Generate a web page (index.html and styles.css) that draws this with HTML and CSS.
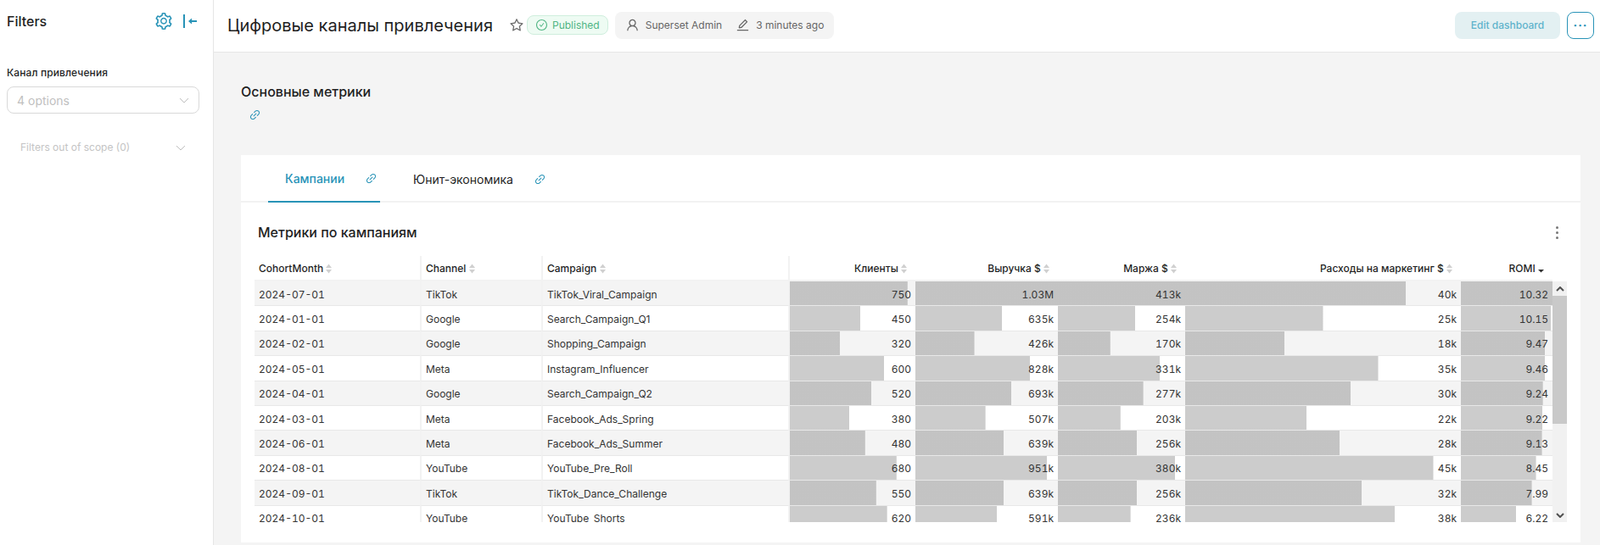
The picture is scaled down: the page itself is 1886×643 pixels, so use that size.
FILE: index.html
```html
<!DOCTYPE html>
<html lang="en">
<head>
    <meta charset="UTF-8">
    <meta name="viewport" content="width=device-width, initial-scale=1.0">
    <title>Цифровые каналы привлечения</title>
    <link rel="stylesheet" href="styles.css">
</head>
<body>
    <svg class="icon-defs" xmlns="http://www.w3.org/2000/svg">
        <symbol id="i-gear" viewBox="64 64 896 896"><path d="M924.8 625.7l-65.5-56c3.1-19 4.7-38.4 4.7-57.8s-1.6-38.8-4.7-57.8l65.5-56a32.03 32.03 0 0 0 9.3-35.2l-.9-2.6a443.74 443.74 0 0 0-79.7-137.9l-1.8-2.1a32.12 32.12 0 0 0-35.1-9.5l-81.3 28.9c-30-24.6-63.5-44-99.7-57.6l-15.7-85a32.05 32.05 0 0 0-25.8-25.7l-2.7-.5c-52.1-9.4-106.9-9.4-159 0l-2.7.5a32.05 32.05 0 0 0-25.8 25.7l-15.8 85.4a351.86 351.86 0 0 0-99 57.4l-81.9-29.1a32 32 0 0 0-35.1 9.5l-1.8 2.1a446.02 446.02 0 0 0-79.7 137.9l-.9 2.6c-4.5 12.5-.8 26.5 9.3 35.2l66.3 56.6c-3.1 18.8-4.6 38-4.6 57.1 0 19.2 1.5 38.4 4.6 57.1L99 625.5a32.03 32.03 0 0 0-9.3 35.2l.9 2.6c18.1 50.4 44.9 96.9 79.7 137.9l1.8 2.1a32.12 32.12 0 0 0 35.1 9.5l81.9-29.1c29.8 24.5 63.1 43.9 99 57.4l15.8 85.4a32.05 32.05 0 0 0 25.8 25.7l2.7.5a449.4 449.4 0 0 0 159 0l2.7-.5a32.05 32.05 0 0 0 25.8-25.7l15.7-85a350 350 0 0 0 99.7-57.6l81.3 28.9a32 32 0 0 0 35.1-9.5l1.8-2.1c34.8-41.1 61.6-87.5 79.7-137.9l.9-2.6c4.5-12.3.8-26.3-9.3-35zM788.3 465.9c2.5 15.1 3.8 30.6 3.8 46.1s-1.3 31-3.8 46.1l-6.6 40.1 74.7 63.9a370.03 370.03 0 0 1-42.6 73.6L721 702.8l-31.4 25.8c-23.9 19.6-50.5 35-79.3 45.8l-38.1 14.3-17.9 97a377.5 377.5 0 0 1-85 0l-17.9-97.2-37.8-14.5c-28.5-10.8-55-26.2-78.7-45.7l-31.4-25.9-93.4 33.2c-17-22.9-31.2-47.6-42.6-73.6l75.5-64.5-6.5-40c-2.4-14.9-3.7-30.3-3.7-45.5 0-15.3 1.2-30.6 3.7-45.5l6.5-40-75.5-64.5c11.3-26.1 25.6-50.7 42.6-73.6l93.4 33.2 31.4-25.9c23.7-19.5 50.2-34.9 78.7-45.7l37.9-14.3 17.9-97.2c28.1-3.2 56.8-3.2 85 0l17.9 97 38.1 14.3c28.7 10.8 55.4 26.2 79.3 45.8l31.4 25.8 92.8-32.9c17 22.9 31.2 47.6 42.6 73.6L781.8 426l6.5 39.9zM512 326c-97.2 0-176 78.8-176 176s78.8 176 176 176 176-78.8 176-176-78.8-176-176-176zm79.2 255.2A111.6 111.6 0 0 1 512 614c-29.9 0-58-11.7-79.2-32.8A111.6 111.6 0 0 1 400 502c0-29.9 11.7-58 32.8-79.2C454 401.6 482.1 390 512 390c29.9 0 58 11.6 79.2 32.8A111.6 111.6 0 0 1 624 502c0 29.9-11.7 58-32.8 79.2z"/></symbol>
        <symbol id="i-link" viewBox="64 64 896 896"><path d="M574 665.4a8.03 8.03 0 0 0-11.3 0L446.5 781.6c-53.8 53.8-144.6 59.5-204 0-59.5-59.5-53.8-150.2 0-204l116.2-116.2c3.1-3.1 3.1-8.2 0-11.3l-39.8-39.8a8.03 8.03 0 0 0-11.3 0L191.4 526.5c-84.6 84.6-84.6 221.5 0 306s221.5 84.6 306 0l116.2-116.2c3.1-3.1 3.1-8.2 0-11.3L574 665.4zm258.6-474c-84.6-84.6-221.5-84.6-306 0L410.3 307.6a8.03 8.03 0 0 0 0 11.3l39.7 39.7c3.1 3.1 8.2 3.1 11.3 0l116.2-116.2c53.8-53.8 144.6-59.5 204 0 59.5 59.5 53.8 150.2 0 204L665.3 562.6a8.03 8.03 0 0 0 0 11.3l39.8 39.8c3.1 3.1 8.2 3.1 11.3 0l116.2-116.2c84.5-84.6 84.5-221.5 0-306.1zM610.1 372.3a8.03 8.03 0 0 0-11.3 0L372.3 598.7a8.03 8.03 0 0 0 0 11.3l39.6 39.6c3.1 3.1 8.2 3.1 11.3 0l226.4-226.4c3.1-3.1 3.1-8.2 0-11.3l-39.5-39.6z"/></symbol>
        <symbol id="i-star" viewBox="64 64 896 896"><path d="M908.1 353.1l-253.9-36.9L540.7 86.1c-3.1-6.3-8.2-11.4-14.5-14.5-15.8-7.8-35-1.3-42.9 14.5L369.8 316.2l-253.9 36.9c-7 1-13.4 4.3-18.3 9.3a32.05 32.05 0 0 0 .6 45.3l183.7 179.1-43.4 252.9a31.95 31.95 0 0 0 46.4 33.7L512 754l227.1 119.4c6.2 3.3 13.4 4.4 20.3 3.2 17.4-3 29.1-19.5 26.1-36.9l-43.4-252.9 183.7-179.1c5-4.9 8.3-11.3 9.3-18.3 2.7-17.5-9.5-33.7-27-36.3zM664.8 561.6l36.1 210.3L512 672.7 323.1 772l36.1-210.3-152.8-149L417.6 382 512 190.7 606.4 382l211.2 30.7-152.8 148.9z"/></symbol>
        <symbol id="i-check" viewBox="64 64 896 896"><path d="M699 353h-46.9c-10.2 0-19.9 4.9-25.9 13.3L469 584.3l-71.2-98.8c-6-8.3-15.6-13.3-25.9-13.3H325c-6.5 0-10.3 7.4-6.5 12.7l124.6 172.8a31.8 31.8 0 0 0 51.7 0l210.6-292c3.9-5.3.1-12.7-6.4-12.7z"/><path d="M512 64C264.6 64 64 264.6 64 512s200.6 448 448 448 448-200.6 448-448S759.4 64 512 64zm0 820c-205.4 0-372-166.6-372-372s166.6-372 372-372 372 166.6 372 372-166.6 372-372 372z"/></symbol>
        <symbol id="i-user" viewBox="64 64 896 896"><path d="M858.5 763.6a374 374 0 0 0-80.6-119.5 375.63 375.63 0 0 0-119.5-80.6c-.4-.2-.8-.3-1.2-.5C719.5 518 760 444.7 760 362c0-137-111-248-248-248S264 225 264 362c0 82.7 40.5 156 102.8 201.1-.4.2-.8.3-1.2.5-44.8 18.9-85 46-119.5 80.6a375.63 375.63 0 0 0-80.6 119.5A371.7 371.7 0 0 0 136 901.8a8 8 0 0 0 8 8.2h60c4.4 0 7.9-3.5 8-7.8 2-77.2 33-149.5 87.8-204.3 56.7-56.7 132-87.9 212.2-87.9s155.5 31.2 212.2 87.9C779 752.7 810 825 812 902.2c.1 4.4 3.6 7.8 8 7.8h60a8 8 0 0 0 8-8.2c-1-47.8-10.9-94.3-29.5-138.2zM512 534c-45.9 0-89.1-17.9-121.6-50.4S340 407.9 340 362c0-45.9 17.9-89.1 50.4-121.6S466.1 190 512 190s89.1 17.9 121.6 50.4S684 316.1 684 362c0 45.9-17.9 89.1-50.4 121.6S557.9 534 512 534z"/></symbol>
        <symbol id="i-edit" viewBox="64 64 896 896"><path d="M257.7 752c2 0 4-.2 6-.5L431.9 722c2-.4 3.9-1.3 5.3-2.8l423.9-423.9a9.96 9.96 0 0 0 0-14.1L694.9 114.9c-1.9-1.9-4.4-2.9-7.1-2.9s-5.2 1-7.1 2.9L256.8 538.8c-1.5 1.5-2.4 3.3-2.8 5.3l-29.5 168.2a33.5 33.5 0 0 0 9.4 29.8c6.6 6.4 14.9 9.9 23.8 9.9zm67.4-174.4L687.8 215l73.3 73.3-362.7 362.6-88.9 15.7 15.6-89zM880 836H144c-17.7 0-32 14.3-32 32v36c0 4.4 3.6 8 8 8h784c4.4 0 8-3.6 8-8v-36c0-17.7-14.3-32-32-32z"/></symbol>
        <symbol id="i-chevron" viewBox="0 0 12 7"><path d="M1 1l5 5 5-5" fill="none" stroke="currentColor" stroke-width="1"/></symbol>
        <symbol id="i-arrow" viewBox="0 0 10 6"><path d="M1 1l4 4 4-4" fill="none" stroke="currentColor" stroke-width="2"/></symbol>
        <symbol id="i-sort" viewBox="0 0 7 12"><path d="M3.5 0.5L7 5H0zM3.5 11.5L0 7H7z"/></symbol>
        <symbol id="i-sort-down" viewBox="0 0 7 12"><path d="M3.5 10.5L0 7H7z"/></symbol>
    </svg>

    <aside class="filters">
        <div class="filters-head">
            <span class="filters-title">Filters</span>
            <svg class="icon icon-gear"><use href="#i-gear"/></svg>
            <svg class="icon-collapse" viewBox="0 0 16 16"><path d="M0 0h2v16H0zM6 8l4-3.5v2.500h6v2h-6v2.500z"/></svg>
        </div>
        <label class="filter-label">Канал привлечения</label>
        <div class="filter-select">
            <span>4 options</span>
            <svg class="chevron"><use href="#i-chevron"/></svg>
        </div>
        <div class="filter-scope">
            <span>Filters out of scope (0)</span>
            <svg class="chevron"><use href="#i-chevron"/></svg>
        </div>
    </aside>

    <div class="main">
        <header class="topbar">
            <h1 class="dash-title">Цифровые каналы привлечения</h1>
            <svg class="icon icon-star"><use href="#i-star"/></svg>
            <span class="badge">
                <svg class="icon icon-check"><use href="#i-check"/></svg>
                Published
            </span>
            <div class="meta">
                <svg class="icon icon-meta"><use href="#i-user"/></svg>
                <span class="meta-user">Superset Admin</span>
                <svg class="icon icon-meta"><use href="#i-edit"/></svg>
                <span>3 minutes ago</span>
            </div>
            <button class="btn-edit">Edit dashboard</button>
            <button class="btn-more">···</button>
        </header>

        <main class="content">
            <h2 class="section-title">Основные метрики</h2>
            <svg class="icon icon-link section-link"><use href="#i-link"/></svg>

            <section class="card">
                <nav class="tabs">
                    <div class="tab tab-active">
                        <span>Кампании</span>
                        <svg class="icon icon-link"><use href="#i-link"/></svg>
                    </div>
                    <div class="tab">
                        <span>Юнит-экономика</span>
                        <svg class="icon icon-link"><use href="#i-link"/></svg>
                    </div>
                </nav>

                <div class="chart-head">
                    <h3 class="chart-title">Метрики по кампаниям</h3>
                    <span class="chart-menu"><i></i><i></i><i></i></span>
                </div>

                <div class="table-wrap">
                    <div class="table-scroll">
                        <table class="metrics">
                            <colgroup>
                                <col class="c-month"><col class="c-channel"><col class="c-campaign"><col class="c-clients"><col class="c-revenue"><col class="c-margin"><col class="c-spend"><col class="c-romi">
                            </colgroup>
                            <thead>
                                <tr>
                                    <th>CohortMonth <svg class="sort"><use href="#i-sort"/></svg></th>
                                    <th class="sep">Channel <svg class="sort"><use href="#i-sort"/></svg></th>
                                    <th class="sep">Campaign <svg class="sort"><use href="#i-sort"/></svg></th>
                                    <th class="sep num">Клиенты <svg class="sort"><use href="#i-sort"/></svg></th>
                                    <th class="num">Выручка $ <svg class="sort"><use href="#i-sort"/></svg></th>
                                    <th class="num">Маржа $ <svg class="sort"><use href="#i-sort"/></svg></th>
                                    <th class="num">Расходы на маркетинг $ <svg class="sort"><use href="#i-sort"/></svg></th>
                                    <th class="num">ROMI <svg class="sort sort-on"><use href="#i-sort-down"/></svg></th>
                                </tr>
                            </thead>
                            <tbody>
                                <tr><td class="mono">2024-07-01</td><td class="sep">TikTok</td><td class="sep">TikTok_Viral_Campaign</td><td class="sep num bar" style="--bar:93.8%">750</td><td class="num bar" style="--bar:100%">1.03M</td><td class="num bar" style="--bar:100%">413k</td><td class="num bar" style="--bar:80%">40k</td><td class="num bar" style="--bar:100%">10.32</td></tr>
                                <tr><td class="mono">2024-01-01</td><td class="sep">Google</td><td class="sep">Search_Campaign_Q1</td><td class="sep num bar" style="--bar:56.3%">450</td><td class="num bar" style="--bar:60.8%">635k</td><td class="num bar" style="--bar:60.8%">254k</td><td class="num bar" style="--bar:50%">25k</td><td class="num bar" style="--bar:98.3%">10.15</td></tr>
                                <tr><td class="mono">2024-02-01</td><td class="sep">Google</td><td class="sep">Shopping_Campaign</td><td class="sep num bar" style="--bar:40%">320</td><td class="num bar" style="--bar:41.4%">426k</td><td class="num bar" style="--bar:41.2%">170k</td><td class="num bar" style="--bar:36%">18k</td><td class="num bar" style="--bar:91.8%">9.47</td></tr>
                                <tr><td class="mono">2024-05-01</td><td class="sep">Meta</td><td class="sep">Instagram_Influencer</td><td class="sep num bar" style="--bar:75%">600</td><td class="num bar" style="--bar:80.4%">828k</td><td class="num bar" style="--bar:80.1%">331k</td><td class="num bar" style="--bar:70%">35k</td><td class="num bar" style="--bar:91.7%">9.46</td></tr>
                                <tr><td class="mono">2024-04-01</td><td class="sep">Google</td><td class="sep">Search_Campaign_Q2</td><td class="sep num bar" style="--bar:65%">520</td><td class="num bar" style="--bar:67.3%">693k</td><td class="num bar" style="--bar:67.1%">277k</td><td class="num bar" style="--bar:60%">30k</td><td class="num bar" style="--bar:89.5%">9.24</td></tr>
                                <tr><td class="mono">2024-03-01</td><td class="sep">Meta</td><td class="sep">Facebook_Ads_Spring</td><td class="sep num bar" style="--bar:47.5%">380</td><td class="num bar" style="--bar:49.2%">507k</td><td class="num bar" style="--bar:49.2%">203k</td><td class="num bar" style="--bar:44%">22k</td><td class="num bar" style="--bar:89.3%">9.22</td></tr>
                                <tr><td class="mono">2024-06-01</td><td class="sep">Meta</td><td class="sep">Facebook_Ads_Summer</td><td class="sep num bar" style="--bar:60%">480</td><td class="num bar" style="--bar:62%">639k</td><td class="num bar" style="--bar:62%">256k</td><td class="num bar" style="--bar:56%">28k</td><td class="num bar" style="--bar:88.5%">9.13</td></tr>
                                <tr><td class="mono">2024-08-01</td><td class="sep">YouTube</td><td class="sep">YouTube_Pre_Roll</td><td class="sep num bar" style="--bar:85%">680</td><td class="num bar" style="--bar:92.3%">951k</td><td class="num bar" style="--bar:92%">380k</td><td class="num bar" style="--bar:90%">45k</td><td class="num bar" style="--bar:82%">8.45</td></tr>
                                <tr><td class="mono">2024-09-01</td><td class="sep">TikTok</td><td class="sep">TikTok_Dance_Challenge</td><td class="sep num bar" style="--bar:68.8%">550</td><td class="num bar" style="--bar:62%">639k</td><td class="num bar" style="--bar:62%">256k</td><td class="num bar" style="--bar:64%">32k</td><td class="num bar" style="--bar:77.4%">7.99</td></tr>
                                <tr><td class="mono">2024-10-01</td><td class="sep">YouTube</td><td class="sep">YouTube_Shorts</td><td class="sep num bar" style="--bar:77.5%">620</td><td class="num bar" style="--bar:57.4%">591k</td><td class="num bar" style="--bar:57.1%">236k</td><td class="num bar" style="--bar:76%">38k</td><td class="num bar" style="--bar:60.3%">6.22</td></tr>
                            </tbody>
                        </table>
                    </div>
                    <div class="scrollbar">
                        <div class="sb-btn"><svg class="sb-arrow sb-up"><use href="#i-arrow"/></svg></div>
                        <div class="sb-thumb"></div>
                        <div class="sb-track"></div>
                        <div class="sb-btn"><svg class="sb-arrow"><use href="#i-arrow"/></svg></div>
                    </div>
                </div>
            </section>
        </main>
    </div>
</body>
</html>
```

FILE: styles.css
```css
* {
    box-sizing: border-box;
}
html, body {
    height: 100%;
}
body {
    margin: 0;
    display: flex;
    overflow: hidden;
    font-family: Inter, "Noto Sans", sans-serif;
    color: #1f1f1f;
    background-color: #fff;
}
.icon-defs {
    display: none;
}
.icon {
    fill: currentColor;
    flex: none;
}

/* filter bar */
.filters {
    width: 252px;
    flex: none;
    border-right: 1px solid #e6e6e6;
    padding: 0 16px 0 8px;
}
.filters-head {
    height: 50px;
    display: flex;
    align-items: center;
    padding-right: 3px;
}
.filters-title {
    font-size: 16px;
    font-weight: 500;
    flex: 1;
}
.icon-gear {
    width: 20px;
    height: 20px;
    color: #2893b7;
}
.icon-collapse {
    width: 16px;
    height: 16px;
    margin-left: 13px;
    fill: #2893b7;
}
.filter-label {
    display: block;
    margin-top: 28px;
    font-size: 12px;
    font-weight: 500;
    letter-spacing: .1px;
    line-height: 16px;
}
.filter-select {
    height: 32px;
    margin-top: 8px;
    border: 1px solid #d9d9d9;
    border-radius: 8px;
    padding: 0 11px;
    display: flex;
    align-items: center;
    justify-content: space-between;
    font-size: 14px;
    color: #bfbfbf;
}
.chevron {
    width: 12px;
    height: 7px;
    color: #bfbfbf;
}
.filter-scope {
    margin-top: 32px;
    padding: 0 16px;
    display: flex;
    align-items: center;
    justify-content: space-between;
    font-size: 12px;
    line-height: 16px;
    color: #c4c4c4;
}

/* header */
.main {
    flex: 1;
    min-width: 0;
    display: flex;
    flex-direction: column;
}
.topbar {
    height: 62px;
    flex: none;
    border-bottom: 1px solid #e6e6e6;
    padding: 0 7px 2px 16px;
    display: flex;
    align-items: center;
}
.dash-title {
    margin: 0;
    font-size: 20px;
    font-weight: 400;
    color: #1f1f1f;
}
.icon-star {
    width: 16px;
    height: 16px;
    margin-left: 20px;
    color: #6b6b6b;
}
.badge {
    height: 23px;
    margin-left: 4px;
    padding: 0 9px 0 10px;
    display: flex;
    align-items: center;
    gap: 6px;
    font-size: 12px;
    color: #4fb583;
    background-color: #eefbf3;
    border: 1px solid #cfeedd;
    border-radius: 8px;
}
.icon-check {
    width: 13px;
    height: 13px;
}
.meta {
    height: 32px;
    margin-left: 8px;
    padding: 0 12px 0 13px;
    display: flex;
    align-items: center;
    gap: 8px;
    font-size: 12px;
    color: #666;
    background-color: #f4f4f4;
    border-radius: 8px;
}
.meta-user {
    margin-right: 9px;
}
.icon-meta {
    width: 15px;
    height: 15px;
}
.btn-edit {
    height: 32px;
    width: 124px;
    margin-left: auto;
    border: 0;
    border-radius: 8px;
    font: 500 12px Inter, sans-serif;
    color: #5fb3cc;
    background-color: #e3f0f2;
}
.btn-more {
    width: 32px;
    height: 32px;
    margin-left: 8px;
    padding: 0;
    border: 1px solid #2893b7;
    border-radius: 8px;
    font: 700 14px Inter, sans-serif;
    letter-spacing: 1px;
    color: #2893b7;
    background-color: #fff;
}

/* dashboard content */
.content {
    flex: 1;
    min-height: 0;
    padding: 0 23px 0 32px;
    background-color: #f4f4f4;
}
.section-title {
    margin: 35px 0 0;
    font-size: 16px;
    font-weight: 500;
    line-height: 22px;
}
.icon-link {
    width: 13px;
    height: 13px;
    color: #2893b7;
}
.section-link {
    display: block;
    margin: 10px 0 0 10px;
}
.card {
    margin-top: 41px;
    height: 457px;
    background-color: #fff;
}
.tabs {
    height: 56px;
    display: flex;
    padding-left: 32px;
    border-bottom: 2px solid #f2f2f2;
}
.tab {
    height: 56px;
    padding: 0 4px 0 20px;
    width: 132px;
    margin-right: 20px;
    display: flex;
    align-items: center;
    gap: 25px;
    font-size: 14px;
    font-weight: 500;
}
.tab + .tab {
    width: auto;
    padding-left: 19px;
    gap: 25px;
    font-weight: 400;
}
.tab-active {
    color: #2893b7;
    border-bottom: 2px solid #2893b7;
}
.chart-head {
    height: 63px;
    padding: 7px 26px 0 20px;
    display: flex;
    align-items: center;
    justify-content: space-between;
}
.chart-title {
    margin: 0;
    font-size: 16px;
    font-weight: 500;
}
.chart-menu {
    display: flex;
    flex-direction: column;
    gap: 3px;
}
.chart-menu i {
    width: 3px;
    height: 3px;
    border-radius: 50%;
    background-color: #777;
}

/* table */
.table-wrap {
    display: flex;
    margin: 0 16px;
    height: 314px;
}
.table-scroll {
    width: 1530px;
    height: 314px;
    overflow: hidden;
}
.metrics {
    width: 1530px;
    table-layout: fixed;
    border-collapse: separate;
    border-spacing: 0;
    font-size: 12px;
}
.c-month { width: 195px; }
.c-channel { width: 143px; }
.c-campaign { width: 291px; }
.c-clients { width: 150px; }
.c-revenue { width: 168px; }
.c-margin { width: 150px; }
.c-spend { width: 325px; }
.c-romi { width: 108px; }
.metrics th {
    height: 30px;
    padding: 0 5px;
    text-align: left;
    font-weight: 500;
    border-bottom: 2px solid #f2f2f2;
    white-space: nowrap;
}
.metrics th.num {
    padding-right: 10px;
}
.metrics td {
    height: 29.4px;
    padding: 2px 5px 0;
    border-bottom: 1px solid #e8e8e8;
    white-space: nowrap;
    color: #333;
}
.metrics tbody tr:nth-child(odd) td {
    background-color: #f4f4f4;
}
.metrics td.mono {
    font-variant-numeric: tabular-nums;
}
.metrics .num {
    text-align: right;
    font-variant-numeric: tabular-nums;
}
.metrics .sep {
    border-left: 2px solid #f2f2f2;
}
.metrics tbody tr td.bar {
    background-image: linear-gradient(rgba(0, 0, 0, .2), rgba(0, 0, 0, .2));
    background-repeat: no-repeat;
    background-size: var(--bar) 100%;
    background-clip: padding-box;
    background-origin: padding-box;
}
.sort {
    width: 7px;
    height: 12px;
    vertical-align: -2px;
    fill: #d0d0d0;
}
.sort-on {
    fill: #333;
}
.scrollbar {
    width: 17px;
    margin-top: 30px;
    display: flex;
    flex-direction: column;
}
.sb-btn {
    height: 17px;
    flex: none;
    display: flex;
    align-items: center;
    justify-content: center;
    background-color: #f1f1f1;
}
.sb-arrow {
    width: 10px;
    height: 6px;
    color: #505050;
}
.sb-up {
    transform: rotate(180deg);
}
.sb-thumb {
    height: 151px;
    flex: none;
    background-color: #c9c9c9;
}
.sb-track {
    flex: 1;
    background-color: #f1f1f1;
}
```
